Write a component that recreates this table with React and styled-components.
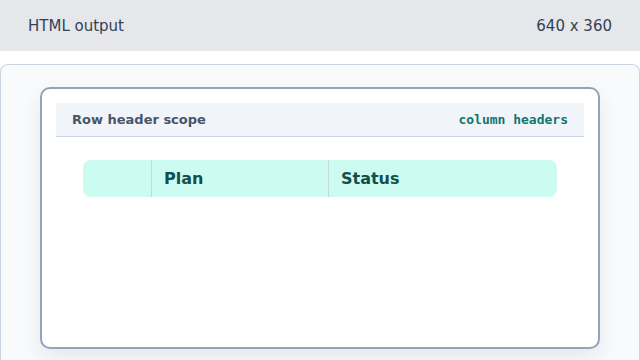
import React from 'react'
import styled, { createGlobalStyle } from 'styled-components'

const GlobalStyle = createGlobalStyle`
  html, body {
    margin: 0;
    padding: 0;
    width: 640px;
    height: 360px;
    overflow: hidden;
    background: #ffffff;
  }
`

const Page = styled.div`
  display: flex;
  flex-direction: column;
  width: 640px;
  height: 360px;
`

const TopBar = styled.div`
  display: flex;
  align-items: center;
  justify-content: space-between;
  height: 51px;
  padding: 0 28px;
  background: #e5e7eb;
  font-family: "DejaVu Sans", sans-serif;
  font-size: 15px;
  color: #334155;
  flex-shrink: 0;
`

const Stage = styled.div`
  flex: 1;
  margin-top: 13px;
  border: 1px solid #cbd5e1;
  border-bottom: none;
  border-radius: 8px 8px 0 0;
  background: #f8fafc;
  padding: 22px 39px 0 39px;
`

const Card = styled.div`
  height: 262px;
  box-sizing: border-box;
  border: 2px solid #94a3b8;
  border-radius: 10px;
  background: #ffffff;
  padding: 14px 14px;
  box-shadow: 0 8px 20px rgba(15, 23, 42, 0.08);
`

const CardHead = styled.div`
  display: flex;
  align-items: center;
  justify-content: space-between;
  height: 33px;
  padding: 0 16px;
  background: #f1f5f9;
  border-bottom: 1px solid #cbd5e1;
`

const Title = styled.span`
  font-family: "DejaVu Sans", sans-serif;
  font-weight: bold;
  font-size: 13px;
  color: #475569;
`

const Tag = styled.span`
  font-family: "DejaVu Sans Mono", monospace;
  font-weight: bold;
  font-size: 13px;
  color: #0f766e;
`

const Table = styled.table`
  width: 474px;
  margin: 23px auto 0;
  border-collapse: separate;
  border-spacing: 0;
`

const Th = styled.th`
  width: ${p => p.$w}px;
  height: 37px;
  padding: 0 12px;
  box-sizing: border-box;
  background: #ccfbf1;
  text-align: left;
  font-family: "DejaVu Sans", sans-serif;
  font-weight: bold;
  font-size: 16px;
  color: #134e4a;
  border-left: 1px solid #cbd5e1;

  &:first-child {
    border-left: none;
    border-radius: 8px 0 0 8px;
  }
  &:last-child {
    border-radius: 0 8px 8px 0;
  }
`

export default function App() {
  return (
    <Page>
      <GlobalStyle />
      <TopBar>
        <span>HTML output</span>
        <span>640 x 360</span>
      </TopBar>
      <Stage>
        <Card>
          <CardHead>
            <Title>Row header scope</Title>
            <Tag>column headers</Tag>
          </CardHead>
          <Table>
            <thead>
              <tr>
                <Th $w={68} aria-label="row"></Th>
                <Th $w={177}>Plan</Th>
                <Th $w={229}>Status</Th>
              </tr>
            </thead>
          </Table>
        </Card>
      </Stage>
    </Page>
  )
}
